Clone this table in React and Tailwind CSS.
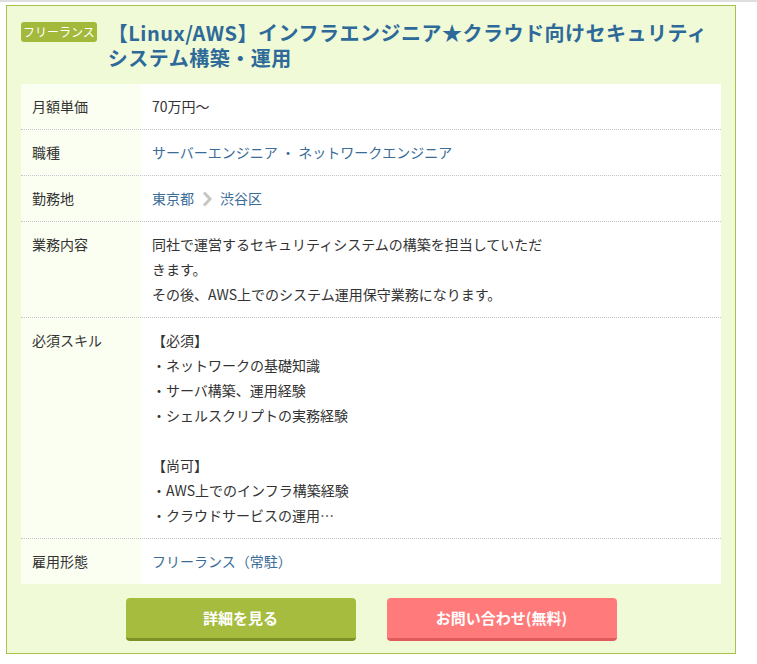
const rows = [
  { label: '月額単価', value: <span className="text-[#333]">70万円〜</span> },
  {
    label: '職種',
    value: <span className="text-[#3a6c98]">サーバーエンジニア ・ ネットワークエンジニア</span>,
  },
  {
    label: '勤務地',
    value: (
      <span className="flex items-center text-[#3a6c98]">
        東京都
        <svg className="mx-[7px]" width="12" height="16" viewBox="0 0 12 16">
          <path d="M3 1.5 L9 8 L3 14.5" fill="none" stroke="#c6c6c6" strokeWidth="3" />
        </svg>
        渋谷区
      </span>
    ),
  },
  {
    label: '業務内容',
    value: (
      <div className="w-[400px] text-[#333]">
        同社で運営するセキュリティシステムの構築を担当していただきます。
        <br />
        その後、AWS上でのシステム運用保守業務になります。
      </div>
    ),
  },
  {
    label: '必須スキル',
    value: (
      <div className="text-[#333]">
        <p>【必須】</p>
        <p>・ネットワークの基礎知識</p>
        <p>・サーバ構築、運用経験</p>
        <p>・シェルスクリプトの実務経験</p>
        <p>&nbsp;</p>
        <p>【尚可】</p>
        <p>・AWS上でのインフラ構築経験</p>
        <p>・クラウドサービスの運用…</p>
      </div>
    ),
  },
  { label: '雇用形態', value: <span className="text-[#3a6c98]">フリーランス（常駐）</span> },
];

export default function App() {
  return (
    <div
      className="min-h-screen bg-white"
      style={{ fontFamily: '"Noto Sans CJK JP", "Noto Sans", sans-serif' }}
    >
      <div className="h-[2px] bg-[#dedede]" />
      <div className="ml-[6px] mt-[3px] w-[730px] border border-[#a8c14a] bg-[#f1fad7] px-[14px] pt-[14px] pb-[12px]">
        {/* Header */}
        <div className="flex items-start gap-[11px]">
          <span className="mt-[2px] shrink-0 rounded-[3px] bg-[#a3b93c] px-[2px] text-[12px] leading-[20px] text-white">
            フリーランス
          </span>
          <h2 className="w-[600px] text-[20px] font-bold leading-[25px] tracking-[0.5px] text-[#2e6a99]">
            【Linux/AWS】インフラエンジニア★クラウド向けセキュリティシステム構築・運用
          </h2>
        </div>

        {/* Detail table */}
        <div className="mt-[14px] bg-white text-[14px] leading-[25px]">
          {rows.map((row, i) => (
            <div
              key={row.label}
              className={`flex ${i < rows.length - 1 ? 'border-b border-dotted border-[#c4c4c4]' : ''}`}
            >
              <div className="w-[120px] shrink-0 bg-[#fbfff2] px-[11px] py-[10px] text-[#333]">
                {row.label}
              </div>
              <div className="flex-1 px-[11px] py-[10px]">{row.value}</div>
            </div>
          ))}
        </div>

        {/* Buttons */}
        <div className="mt-[14px] flex justify-center gap-[31px]">
          <button className="h-[43px] w-[230px] rounded-[4px] border-b-[3px] border-[#7d9128] bg-[#a6bc3e] text-[15px] font-bold text-white">
            詳細を見る
          </button>
          <button className="h-[43px] w-[230px] rounded-[4px] border-b-[3px] border-[#e05c5c] bg-[#ff7b7b] text-[15px] font-bold text-white">
            お問い合わせ(無料)
          </button>
        </div>
      </div>
    </div>
  );
}
